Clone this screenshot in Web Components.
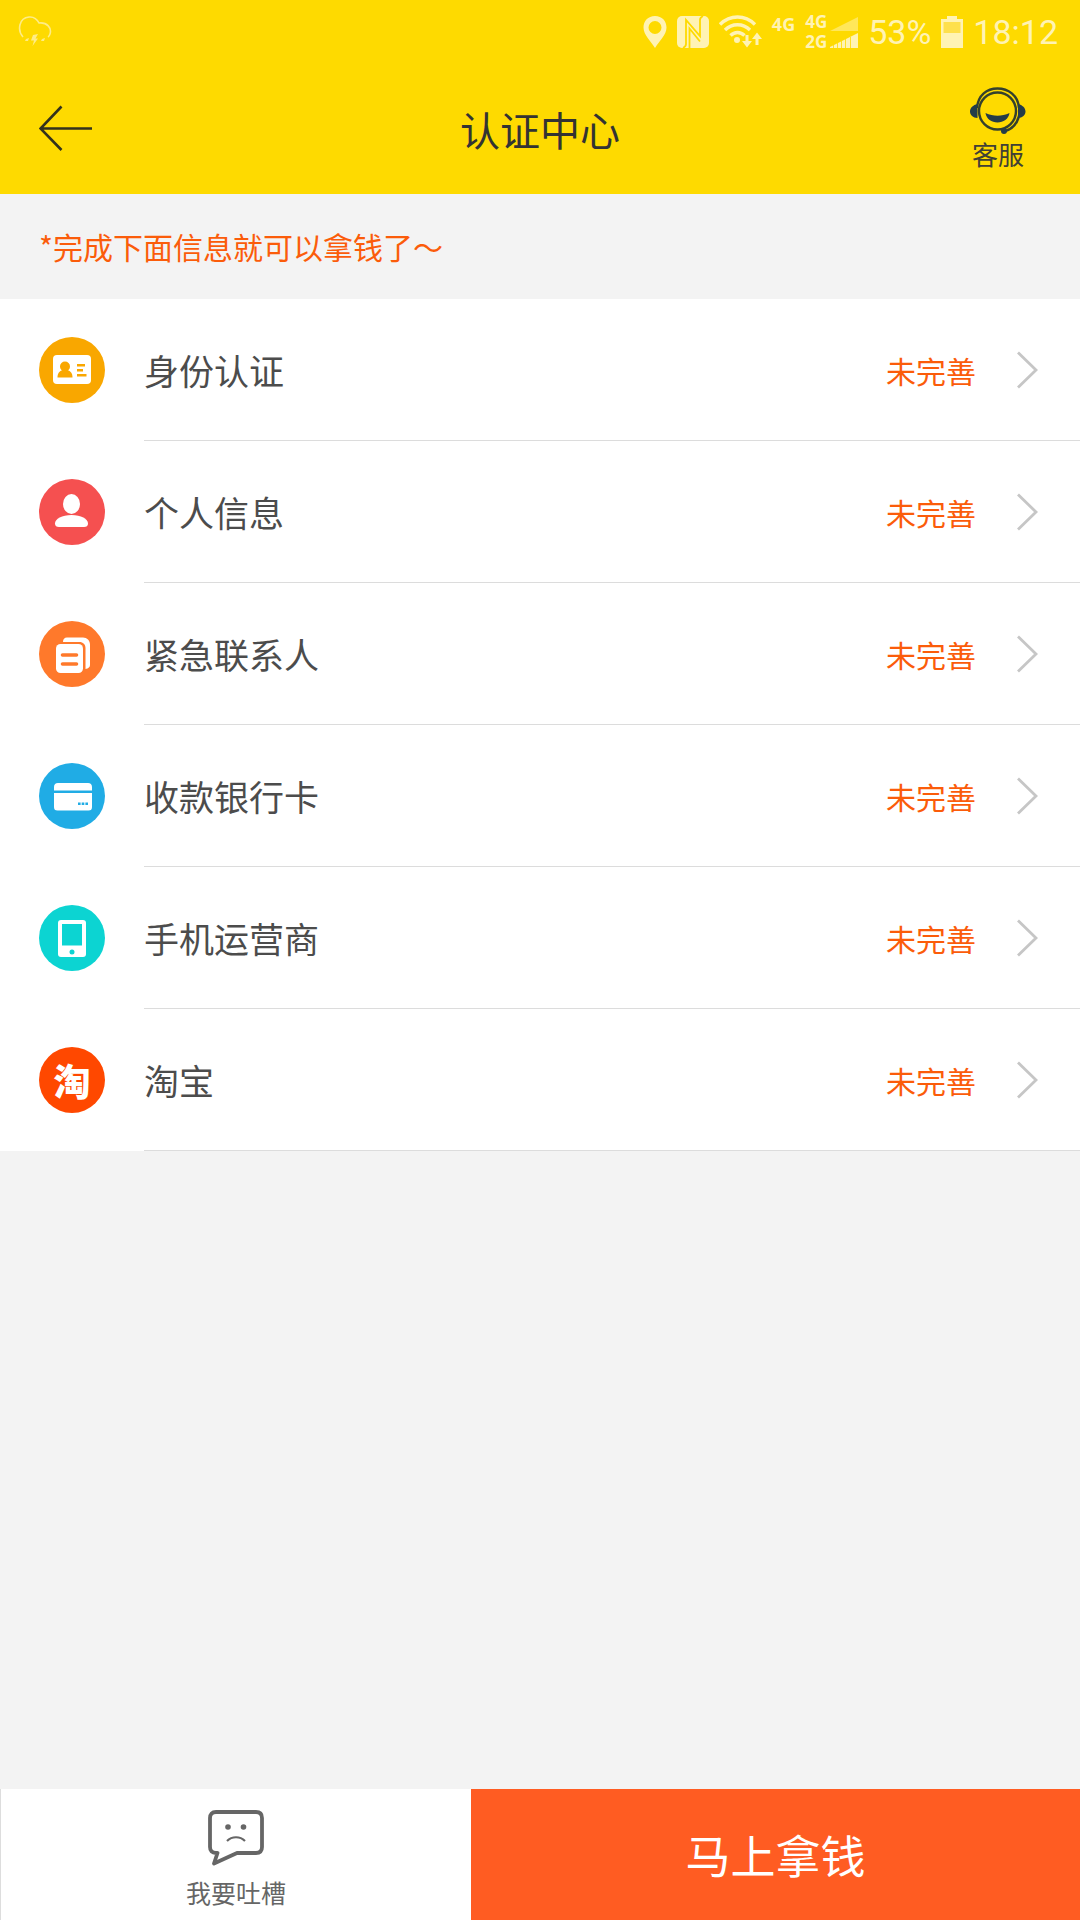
<!DOCTYPE html>
<html lang="zh-CN">
<head>
<meta charset="utf-8">
<meta name="viewport" content="width=device-width, initial-scale=1">
<title>认证中心</title>
<style>
  html, body { margin: 0; height: 100%; }
  body { background: #f3f3f3; color: #4c4c4c; font-family: "Noto Sans CJK SC", sans-serif; }
</style>
</head>
<body>
<cert-page>
  <status-bar slot="top"></status-bar>
  <nav-header slot="top">认证中心</nav-header>
  <cert-list>
    <span slot="notice">*完成下面信息就可以拿钱了～</span>
    <cert-row state="未完善">
      <svg slot="icon" width="66" height="66" viewBox="0 0 66 66" aria-hidden="true"><circle cx="33" cy="33" r="33" fill="#f9a700"/><rect x="14" y="18" width="38" height="29" rx="4" fill="#fff"/><g fill="#f9a700"><circle cx="26" cy="29.500" r="5"/><path d="M18.500 40.500c0-4.500 2-6.500 5-7.500h5c3 1 5 3 5 7.500z"/><path d="M38 27h8v2.400h-8zM38 32h6v2.400h-6zM38 37h9.500v2.400H38z"/></g></svg>
      身份认证
    </cert-row>
    <cert-row state="未完善">
      <svg slot="icon" width="66" height="66" viewBox="0 0 66 66" aria-hidden="true"><circle cx="33" cy="33" r="33" fill="#f55050"/><g fill="#fff"><ellipse cx="32.500" cy="25" rx="8.500" ry="10"/><path d="M16 44.500c0-4.500 7-8.500 16.500-8.500S49 40 49 44.500c0 2.500-1.500 3.500-4 3.500H20c-2.500 0-4-1-4-3.500z"/></g></svg>
      个人信息
    </cert-row>
    <cert-row state="未完善">
      <svg slot="icon" width="66" height="66" viewBox="0 0 66 66" aria-hidden="true"><circle cx="33" cy="33" r="33" fill="#ff792b"/><path d="M24 21c0-3 1.500-4.500 4-4.500h16c4 0 7 3 7 7V44c0 2-1.500 3.500-4.500 4V27c0-3.500-2.500-6-6-6z" fill="#fff"/><rect x="17" y="23" width="27" height="29" rx="4.500" fill="#fff"/><path d="M23.500 34h14M23.500 43h14" stroke="#ff792b" stroke-width="3.600" stroke-linecap="round"/></svg>
      紧急联系人
    </cert-row>
    <cert-row state="未完善">
      <svg slot="icon" width="66" height="66" viewBox="0 0 66 66" aria-hidden="true"><circle cx="33" cy="33" r="33" fill="#20ace5"/><path d="M15 27.500V24c0-2.500 1.500-4 4-4h30c2.500 0 4 1.500 4 4v3.500zM15 30h38v14c0 2.500-1 3.500-3.500 3.500h-31C16 47.500 15 46.500 15 44z" fill="#fff"/><path d="M39 39.500h2.600v2.600H39zM42.700 39.500h2.600v2.600h-2.600zM46.400 39.500H49v2.600h-2.600z" fill="#20ace5"/></svg>
      收款银行卡
    </cert-row>
    <cert-row state="未完善">
      <svg slot="icon" width="66" height="66" viewBox="0 0 66 66" aria-hidden="true"><circle cx="33" cy="33" r="33" fill="#0cd4d2"/><rect x="19" y="15" width="28" height="37" rx="3" fill="#fff"/><path d="M23 19h20v21.500H23z" fill="#0cd4d2"/><circle cx="33" cy="47" r="2.500" fill="#0cd4d2"/></svg>
      手机运营商
    </cert-row>
    <cert-row state="未完善">
      <taobao-badge slot="icon">淘</taobao-badge>
      淘宝
    </cert-row>
  </cert-list>
  <action-bar slot="bottom">
    <span slot="feedback">我要吐槽</span>
    <span slot="submit">马上拿钱</span>
  </action-bar>
</cert-page>

<script>
const define = (name, html) => customElements.define(name, class extends HTMLElement {
  constructor() {
    super();
    this.attachShadow({ mode: 'open' }).innerHTML = html;
  }
});

define('cert-page', `
<style>
  :host { display: flex; flex-direction: column; min-height: 100vh; }
  header { background: #feda00; }
  main { flex: 1; }
</style>
<header><slot name="top"></slot></header>
<main><slot></slot></main>
<footer><slot name="bottom"></slot></footer>`);

define('status-bar', `
<style>
  :host { display: flex; justify-content: space-between; align-items: center; height: 64px; padding: 0 22px 0 18px; box-sizing: border-box; color: #fff3b4; font: 400 34px/40px Roboto, sans-serif; }
  .right { display: flex; align-items: center; gap: 10px; }
  svg { display: block; fill: currentColor; }
  .net { font: bold 18px/20px "Open Sans", sans-serif; align-self: flex-start; padding-top: 2px; }
  .sims { display: flex; align-items: center; gap: 3px; font: bold 17px/20px "Open Sans", sans-serif; }
  .sims div { display: flex; flex-direction: column; }
</style>
<svg width="36" height="34" viewBox="0 0 36 34" aria-hidden="true" style="opacity:.75"><path d="M5 22C-1 15 1 3 11 2c5-.5 8 2 10 6 8-1 13 5 11 11-.5 1.500-1 2.500-2 3" fill="none" stroke="currentColor" stroke-width="1.600"/><path d="M15 20l5-1-2.500 4.500H20L14.500 31l1.500-5.500h-3zM8 24l3-1-1 3H7zM24 24l3-1-1 3h-3z"/></svg>
<div class="right">
  <svg width="24" height="34" viewBox="0 0 24 34" aria-hidden="true"><path fill-rule="evenodd" d="M12 1C5 1 .500 6 .500 12.500.500 20 8 26 12 33c4-7 11.500-13 11.500-20.500C23.500 6 19 1 12 1zm0 5a6.500 6.500 0 1 1 0 13 6.500 6.500 0 0 1 0-13z"/></svg>
  <svg width="32" height="34" viewBox="0 0 32 34" aria-hidden="true"><rect y="1" width="32" height="32" rx="5"/><path d="M6 33c2-1 3-2 3-4V5l14 16V5c0-2 1-3 3-4M12.500 33V13.500L23 26.500" fill="none" stroke="#feda00" stroke-width="1.800"/></svg>
  <svg width="43" height="34" viewBox="0 0 43 34" aria-hidden="true"><g fill="none" stroke="currentColor" stroke-width="3.400"><path d="M1 9.500C11-.500 26-.500 36 9.500M6 15c7-7 18-7 25 0M11.500 20.500c4-4 10-4 14 0"/></g><circle cx="18" cy="25" r="3"/><path d="M26.500 20h3v6h3.500l-5 6.500-5-6.500h3.500zM36.500 30h3v-6H43l-5-6.500-5 6.500h3.500z"/></svg>
  <span class="net">4G</span>
  <div class="sims">
    <div><span>4G</span><span>2G</span></div>
    <svg width="28" height="34" viewBox="0 0 28 34" aria-hidden="true"><path d="M28 2v14H0z" opacity=".5"/><path d="M28 18v15H0v-1z"/><path d="M3.500 30v4M7.500 28v6M11.500 26v8M15.500 24v10M20.500 22v12" stroke="#feda00" stroke-width=".8"/></svg>
  </div>
  <span>53%</span>
  <svg width="22" height="34" viewBox="0 0 22 34" aria-hidden="true"><path d="M6 1h10v3h6v29H0V4h6z"/><path d="M2.500 7h17v11h-17z" fill="#fee04c"/></svg>
  <span>18:12</span>
</div>`);

define('nav-header', `
<style>
  :host { display: grid; grid-template-columns: 1fr auto 1fr; align-items: center; height: 130px; padding: 0 39px; box-sizing: border-box; color: #333; }
  button { all: unset; cursor: pointer; }
  h1 { margin: 0; font-size: 40px; line-height: 58px; font-weight: 400; }
  svg { display: block; }
  .service { justify-self: end; display: flex; flex-direction: column; align-items: center; padding: 2px 15px 0; font-size: 26px; line-height: 38px; color: #404036; }
</style>
<button aria-label="返回"><svg width="54" height="48" viewBox="0 0 54 48" aria-hidden="true"><path d="M22.500 1.500L1.500 23.500l21 21.500M1.500 23.500H53" fill="none" stroke="#33321c" stroke-width="2.600"/></svg></button>
<h1><slot></slot></h1>
<button class="service">
  <svg width="56" height="48" viewBox="0 0 56 48" aria-hidden="true"><g fill="none" stroke="#34402d" stroke-width="2.400"><circle cx="27.500" cy="24" r="18.500"/><path d="M7 21C8 8 17 1.500 27.500 1.500S48 8 49 21M50 24c-1.500 11-7 18.500-16 20.500"/></g><g fill="#243c48"><path d="M7.500 17v14C3 31 0 28 0 24.500S3 18 7.500 17zM48 17v14c4.500 0 7.500-3 7.500-6.500S52.500 18 48 17z"/><path d="M15.500 26c8 3.500 16 3.500 24 0-1 6-6 9.500-12 9.500s-11-3.500-12-9.500z"/><circle cx="34" cy="44" r="3"/></g></svg>
  <span>客服</span>
</button>`);

define('cert-list', `
<style>
  :host { display: block; }
  p { margin: 0; padding: 30px 39px 31px; font-size: 30px; line-height: 44px; color: #fb5c0a; }
  .rows { background: #fff; }
</style>
<p><slot name="notice"></slot></p>
<div class="rows"><slot></slot></div>`);

define('taobao-badge', `
<style>
  :host { display: flex; align-items: center; justify-content: center; width: 66px; height: 66px; border-radius: 50%; background: #ff4800; color: #fff; font-size: 37px; line-height: 36px; font-weight: 900; }
</style>
<slot></slot>`);

customElements.define('cert-row', class extends HTMLElement {
  constructor() {
    super();
    this.attachShadow({ mode: 'open' }).innerHTML = `
<style>
  :host { display: block; }
  a { display: flex; align-items: stretch; padding-left: 39px; gap: 39px; color: inherit; text-decoration: none; }
  .icon { display: flex; align-items: center; }
  .body { flex: 1; display: flex; align-items: center; height: 141px; border-bottom: 1px solid #dcdcdc; padding-right: 42px; }
  .label { flex: 1; font-size: 35px; line-height: 50px; }
  .state { font-size: 30px; line-height: 44px; color: #fb5c0a; margin-right: 40px; }
  svg { display: block; }
</style>
<a href="#">
  <span class="icon"><slot name="icon"></slot></span>
  <span class="body">
    <span class="label"><slot></slot></span>
    <span class="state"></span>
    <svg width="22" height="38" viewBox="0 0 22 38" aria-hidden="true"><path d="M2 1.500L20 19 2 36.500" fill="none" stroke="#c6c6c6" stroke-width="2.800"/></svg>
  </span>
</a>`;
    this.shadowRoot.querySelector('.state').textContent = this.getAttribute('state');
  }
});

define('action-bar', `
<style>
  :host { display: grid; grid-template-columns: 471fr 609fr; height: 131px; }
  button { border: 0; margin: 0; padding: 0; font: inherit; cursor: pointer; }
  .feedback { display: flex; flex-direction: column; align-items: center; justify-content: center; gap: 8px; padding-top: 10px; background: #fff; border-left: 1px solid #ddd; color: #666; font-size: 25px; line-height: 36px; }
  .submit { background: #ff5c22; color: #fff; font-size: 45px; line-height: 66px; }
  svg { display: block; }
</style>
<button class="feedback">
  <svg width="56" height="56" viewBox="0 0 56 56" aria-hidden="true"><path d="M8 2h40c4 0 6 2 6 6v29c0 4-2 6-6 6H29L6 53.500 9.500 43H8c-4 0-6-2-6-6V8c0-4 2-6 6-6z" fill="none" stroke="#666" stroke-width="3.800" stroke-linejoin="round"/><circle cx="20" cy="17" r="2.800" fill="#666"/><circle cx="35.500" cy="17" r="2.800" fill="#666"/><path d="M19 31c5-5 13-5 18 0" fill="none" stroke="#666" stroke-width="2.200"/></svg>
  <slot name="feedback"></slot>
</button>
<button class="submit"><slot name="submit"></slot></button>`);
</script>
</body>
</html>
